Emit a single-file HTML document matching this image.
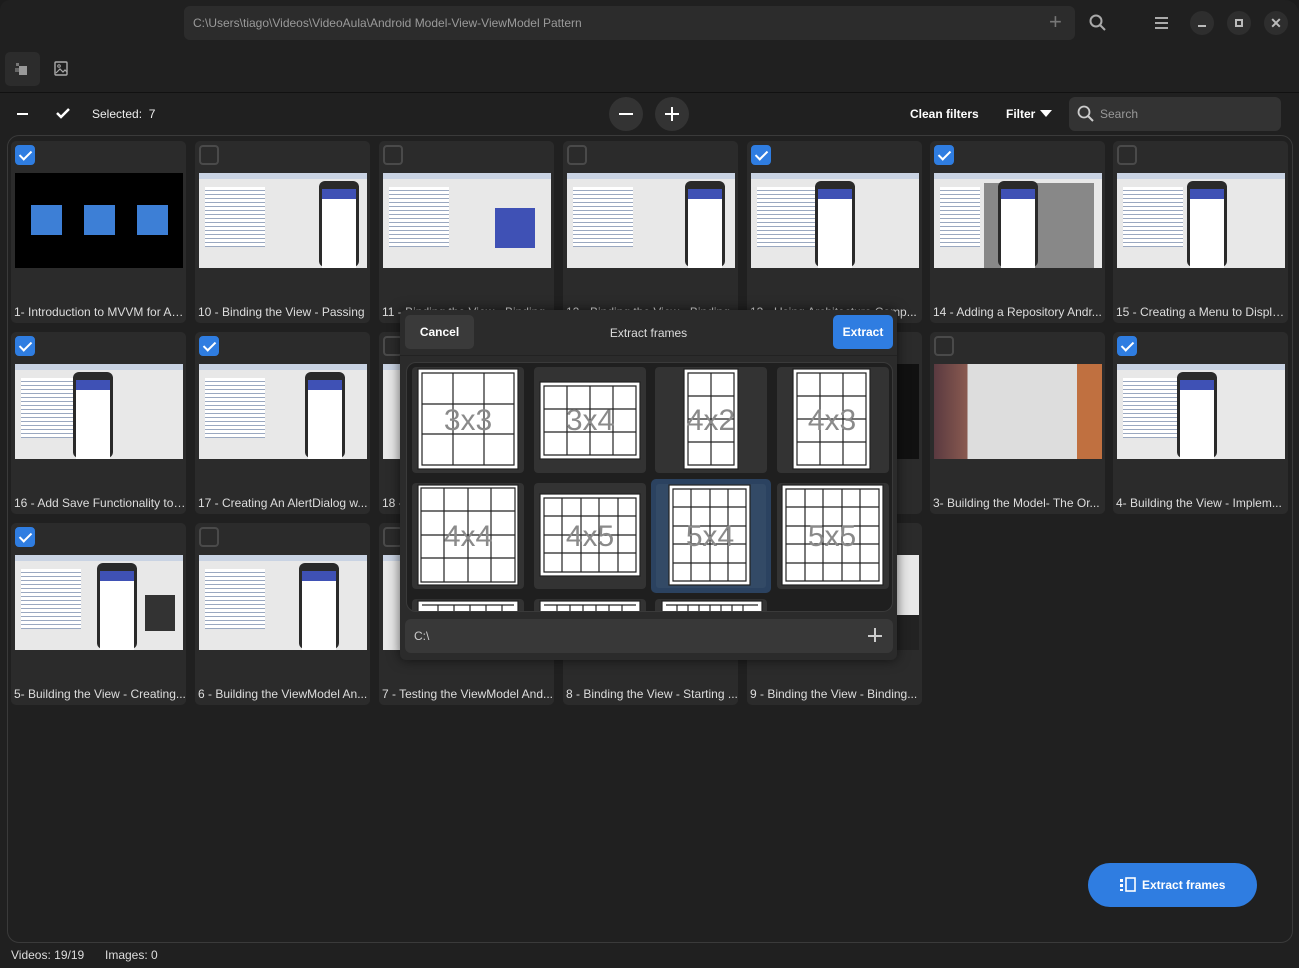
<!DOCTYPE html>
<html><head><meta charset="utf-8"><style>
*{box-sizing:border-box;margin:0;padding:0}
body{width:1299px;height:968px;background:#1c1c1c;font-family:"Liberation Sans",sans-serif;font-size:12px;color:#ddd;position:relative;overflow:hidden}
.win{position:absolute;left:0;top:0;width:1299px;height:968px;background:#202020;border-radius:10px 14px 0 0}
.abs{position:absolute}
.path{left:184px;top:6px;width:891px;height:34px;background:#2c2c2c;border-radius:6px;color:#9a9a9a;padding:10px 9px;font-size:12px}
.cbtn{width:24px;height:24px;border-radius:50%;background:#2e2e2e;top:11px}
.sep{left:0;top:92px;width:1299px;height:1px;background:#111}
.gridbox{left:7px;top:135px;width:1286px;height:808px;border:1px solid #3a3a3a;border-radius:12px}
.card{position:absolute;width:175px;height:182px;background:#2b2b2b;border-radius:5px}
.card .cb{position:absolute;left:4px;top:4px;width:20px;height:20px;border-radius:4px;border:2px solid #4a4a4a}
.card .cb.on{background:#2f7de1;border-color:#2f7de1}
.card .cb.on:after{content:"";position:absolute;left:5px;top:1px;width:5px;height:10px;border:solid #fff;border-width:0 2.5px 2.5px 0;transform:rotate(45deg)}
.card .th{position:absolute;left:4px;top:32px;width:168px;height:95px;background:#e8e8e8;overflow:hidden}
.th .ph{position:absolute;top:8px;width:40px;height:86px;background:#2a2a2a;border-radius:6px}
.th .ph:after{content:"";position:absolute;left:3px;top:8px;width:34px;height:70px;background:#fff;border-top:10px solid #3f51b5}
.th .bar{position:absolute;left:0;top:0;width:100%;height:6px;background:#c9d3e3}
.th .code{position:absolute;left:6px;top:14px;width:60px;height:60px;background:repeating-linear-gradient(#fff 0 3px,#9aa8c0 3px 4px)}
.card .lb{position:absolute;left:3px;top:164px;width:172px;white-space:nowrap;overflow:hidden;text-overflow:ellipsis;font-size:12px;color:#ddd}
.dlg{left:400px;top:310px;width:497px;height:350px;background:#2b2b2b;border-radius:6px;box-shadow:0 0 12px rgba(0,0,0,.6)}
.tile{position:absolute;width:112px;height:106px;background:#333;border-radius:4px}
.tile svg{position:absolute}
</style></head><body>
<div class="win">
<div class="abs path">C:\Users\tiago\Videos\VideoAula\Android Model-View-ViewModel Pattern</div>
<div class="abs" style="left:1049px;top:11px;color:#777;font-size:22px;line-height:22px">+</div>
<svg class="abs" style="left:1089px;top:14px" width="18" height="18"><circle cx="7" cy="7" r="5.5" fill="none" stroke="#aaa" stroke-width="2"/><line x1="11" y1="11" x2="16" y2="16" stroke="#aaa" stroke-width="2"/></svg>
<svg class="abs" style="left:1155px;top:17px" width="14" height="12"><path d="M0 1h13M0 6h13M0 11h13" stroke="#aaa" stroke-width="2"/></svg>
<div class="abs cbtn" style="left:1190px"><div class="abs" style="left:8px;top:14px;width:8px;height:2px;background:#bbb"></div></div>
<div class="abs cbtn" style="left:1227px"><div class="abs" style="left:8px;top:8px;width:8px;height:8px;border:2px solid #bbb"></div></div>
<div class="abs cbtn" style="left:1264px;color:#bbb;font-size:14px;text-align:center;line-height:24px;font-weight:bold">✕</div>
<div class="abs" style="left:5px;top:52px;width:35px;height:34px;background:#2c2c2c;border-radius:5px"></div>
<svg class="abs" style="left:14px;top:62px" width="18" height="16"><rect x="2" y="1" width="3" height="3" fill="#777"/><rect x="5" y="4" width="8" height="9" fill="#999"/><path d="M1 6h4v4H1z" fill="#666"/></svg>
<svg class="abs" style="left:54px;top:61px" width="14" height="16"><rect x="1" y="1" width="12" height="13" rx="1" fill="none" stroke="#aaa" stroke-width="1.4"/><path d="M2 12l4-4 3 3 2-2 2 2" fill="none" stroke="#aaa" stroke-width="1.2"/><circle cx="5" cy="5" r="1.3" fill="none" stroke="#aaa"/></svg>
<div class="abs sep"></div>
<div class="abs" style="left:17px;top:113px;width:11px;height:2px;background:#fff"></div>
<svg class="abs" style="left:56px;top:107px" width="14" height="12"><path d="M1 6l4 4 8-8" fill="none" stroke="#fff" stroke-width="2.5"/></svg>
<div class="abs" style="left:92px;top:107px;color:#eee">Selected:&nbsp; 7</div>
<div class="abs" style="left:609px;top:97px;width:34px;height:34px;border-radius:50%;background:#333"><div class="abs" style="left:10px;top:16px;width:14px;height:2px;background:#fff"></div></div>
<div class="abs" style="left:655px;top:97px;width:34px;height:34px;border-radius:50%;background:#333"><div class="abs" style="left:10px;top:16px;width:14px;height:2px;background:#fff"></div><div class="abs" style="left:16px;top:10px;width:2px;height:14px;background:#fff"></div></div>
<div class="abs" style="left:910px;top:107px;color:#fff;font-weight:bold;font-size:12px">Clean filters</div>
<div class="abs" style="left:1006px;top:107px;color:#fff;font-weight:bold;font-size:12px">Filter</div>
<svg class="abs" style="left:1040px;top:110px" width="12" height="7"><path d="M0 0h12L6 7z" fill="#fff"/></svg>
<div class="abs" style="left:1069px;top:97px;width:212px;height:34px;background:#333;border-radius:6px"></div>
<svg class="abs" style="left:1077px;top:105px" width="18" height="18"><circle cx="7" cy="7" r="5.5" fill="none" stroke="#ccc" stroke-width="1.8"/><line x1="11" y1="11" x2="16" y2="16" stroke="#ccc" stroke-width="2"/></svg>
<div class="abs" style="left:1100px;top:107px;color:#999">Search</div>
<div class="abs gridbox"></div>

<!-- row 1 -->
<div class="card" style="left:11px;top:141px"><div class="cb on"></div><div class="th" style="background:#000"><div class="abs" style="left:16px;top:32px;width:31px;height:30px;background:#3d7fd6"></div><div class="abs" style="left:69px;top:32px;width:31px;height:30px;background:#3d7fd6"></div><div class="abs" style="left:122px;top:32px;width:31px;height:30px;background:#3d7fd6"></div></div><div class="lb">1- Introduction to MVVM for Android</div></div>
<div class="card" style="left:195px;top:141px"><div class="cb"></div><div class="th"><div class="bar"></div><div class="code"></div><div class="ph" style="left:120px"></div></div><div class="lb">10 - Binding the View - Passing</div></div>
<div class="card" style="left:379px;top:141px"><div class="cb"></div><div class="th"><div class="bar"></div><div class="code"></div><div class="abs" style="left:112px;top:35px;width:40px;height:40px;background:#3f51b5"></div></div><div class="lb">11 - Binding the View - Binding</div></div>
<div class="card" style="left:563px;top:141px"><div class="cb"></div><div class="th"><div class="bar"></div><div class="code"></div><div class="ph" style="left:118px"></div></div><div class="lb">12 - Binding the View - Binding</div></div>
<div class="card" style="left:747px;top:141px"><div class="cb on"></div><div class="th"><div class="bar"></div><div class="code"></div><div class="ph" style="left:64px"></div></div><div class="lb">13 - Using Architecture Comp...</div></div>
<div class="card" style="left:930px;top:141px"><div class="cb on"></div><div class="th"><div class="bar"></div><div class="code" style="width:40px"></div><div class="abs" style="left:50px;top:10px;width:110px;height:85px;background:#888"></div><div class="ph" style="left:64px"></div></div><div class="lb">14 - Adding a Repository Andr...</div></div>
<div class="card" style="left:1113px;top:141px"><div class="cb"></div><div class="th"><div class="bar"></div><div class="code"></div><div class="ph" style="left:70px"></div></div><div class="lb">15 - Creating a Menu to Displa...</div></div>
<!-- row 2 -->
<div class="card" style="left:11px;top:332px"><div class="cb on"></div><div class="th"><div class="bar"></div><div class="code"></div><div class="ph" style="left:58px"></div></div><div class="lb">16 - Add Save Functionality to ...</div></div>
<div class="card" style="left:195px;top:332px"><div class="cb on"></div><div class="th"><div class="bar"></div><div class="code"></div><div class="ph" style="left:106px"></div></div><div class="lb">17 - Creating An AlertDialog w...</div></div>
<div class="card" style="left:379px;top:332px"><div class="cb"></div><div class="th"><div class="bar"></div></div><div class="lb">18 - Binding</div></div>
<div class="card" style="left:563px;top:332px"><div class="cb"></div><div class="th"></div><div class="lb">2 -</div></div>
<div class="card" style="left:747px;top:332px"><div class="cb"></div><div class="th" style="background:#111"></div><div class="lb">2 - Different...</div></div>
<div class="card" style="left:930px;top:332px"><div class="cb"></div><div class="th" style="background:linear-gradient(90deg,#5a3a40,#8a5a50 20%,#ddd 20%,#ddd 85%,#c07040 85%)"></div><div class="lb">3- Building the Model- The Or...</div></div>
<div class="card" style="left:1113px;top:332px"><div class="cb on"></div><div class="th"><div class="bar"></div><div class="code"></div><div class="ph" style="left:60px"></div></div><div class="lb">4- Building the View - Implem...</div></div>
<!-- row 3 -->
<div class="card" style="left:11px;top:523px"><div class="cb on"></div><div class="th"><div class="bar"></div><div class="code"></div><div class="ph" style="left:82px"></div><div class="abs" style="left:130px;top:40px;width:30px;height:36px;background:#333"></div></div><div class="lb">5- Building the View - Creating...</div></div>
<div class="card" style="left:195px;top:523px"><div class="cb"></div><div class="th"><div class="bar"></div><div class="code"></div><div class="ph" style="left:100px"></div></div><div class="lb">6 - Building the ViewModel An...</div></div>
<div class="card" style="left:379px;top:523px"><div class="cb"></div><div class="th"><div class="bar"></div></div><div class="lb">7 - Testing the ViewModel And...</div></div>
<div class="card" style="left:563px;top:523px"><div class="cb"></div><div class="th"></div><div class="lb">8 - Binding the View - Starting ...</div></div>
<div class="card" style="left:747px;top:523px"><div class="cb"></div><div class="th"><div class="abs" style="left:140px;top:60px;width:28px;height:35px;background:#222"></div></div><div class="lb">9 - Binding the View - Binding...</div></div>

<!-- dialog -->
<div class="abs dlg">
 <div class="abs" style="left:5px;top:5px;width:69px;height:34px;background:#3a3a3a;border-radius:5px;color:#fff;font-weight:bold;text-align:center;line-height:34px">Cancel</div>
 <div class="abs" style="left:0;top:16px;width:497px;text-align:center;color:#ddd">Extract frames</div>
 <div class="abs" style="left:433px;top:5px;width:60px;height:34px;background:#2f7de1;border-radius:5px;color:#fff;font-weight:bold;text-align:center;line-height:34px">Extract</div>
 <div class="abs" style="left:0;top:45px;width:497px;height:1px;background:#222"></div>
 <div class="abs" style="left:6px;top:52px;width:487px;height:250px;background:#1f1f1f;border:1px solid #3a3a3a;border-radius:10px;overflow:hidden">
 <svg width="487" height="250" style="position:absolute;left:0;top:0" font-family="Liberation Sans,sans-serif">
  <g fill="#333"><rect x="5" y="4" width="112" height="106" rx="4"/><rect x="127" y="4" width="112" height="106" rx="4"/><rect x="248" y="4" width="112" height="106" rx="4"/><rect x="370" y="4" width="112" height="106" rx="4"/><rect x="5" y="120" width="112" height="106" rx="4"/><rect x="127" y="120" width="112" height="106" rx="4"/><rect x="370" y="120" width="112" height="106" rx="4"/><rect x="5" y="236" width="112" height="30" rx="4"/><rect x="127" y="236" width="112" height="30" rx="4"/><rect x="248" y="236" width="112" height="30" rx="4"/></g>
  <rect x="244" y="116" width="120" height="114" rx="5" fill="#2b4260"/><rect x="249" y="121" width="110" height="104" rx="3" fill="#334a66"/>
  <g stroke="#222" stroke-width="1.2" fill="#fff">
   <rect x="11" y="6" width="100" height="100"/><rect x="133" y="19" width="100" height="77"/><rect x="277" y="6" width="54" height="100"/><rect x="386" y="6" width="77" height="100"/>
   <rect x="11" y="122" width="100" height="100"/><rect x="133" y="131" width="100" height="82"/><rect x="262" y="122" width="81" height="100"/><rect x="375" y="122" width="101" height="100"/>
   <rect x="11" y="238" width="100" height="20"/><rect x="133" y="238" width="100" height="20"/><rect x="255" y="238" width="100" height="20"/>
  </g>
  <g stroke="#222" stroke-width="1.2" fill="none">
   <path d="M15 10h92v92h-92zM46 10v92M77 10v92M15 41h92M15 71h92"/>
   <path d="M137 23h92v69h-92zM160 23v69M183 23v69M206 23v69M137 46h92M137 69h92"/>
   <path d="M281 10h46v92h-46zM304 10v92M281 33h46M281 56h46M281 79h46"/>
   <path d="M390 10h69v92h-69zM413 10v92M436 10v92M390 33h69M390 56h69M390 79h69"/>
   <path d="M14 125h94v94h-94zM37 125v94M61 125v94M84 125v94M14 148h94M14 172h94M14 195h94"/>
   <path d="M137 135h92v74h-92zM155 135v74M174 135v74M192 135v74M211 135v74M137 153h92M137 172h92M137 190h92"/>
   <path d="M266 126h73v92h-73zM284 126v92M303 126v92M321 126v92M266 144h73M266 163h73M266 181h73M266 200h73"/>
   <path d="M379 126h93v92h-93zM398 126v92M416 126v92M435 126v92M453 126v92M379 144h93M379 163h93M379 181h93M379 200h93"/>
   <path d="M15 242h92M31 242v16M47 242v16M63 242v16M79 242v16M95 242v16M137 242h92M150 242v16M163 242v16M176 242v16M189 242v16M202 242v16M215 242v16M259 242h92M270 242v16M281 242v16M292 242v16M303 242v16M314 242v16M325 242v16M336 242v16"/>
  </g>
  <g fill="#8a8a8a" font-size="30" text-anchor="middle">
   <text x="61" y="67">3x3</text><text x="183" y="67">3x4</text><text x="304" y="67">4x2</text><text x="425" y="67">4x3</text>
   <text x="61" y="183">4x4</text><text x="183" y="183">4x5</text><text x="303" y="183">5x4</text><text x="425" y="183">5x5</text>
  </g>
 </svg>
 </div>
 <div class="abs" style="left:5px;top:309px;width:488px;height:34px;background:#383838;border-radius:6px;color:#ccc;padding:10px 9px">C:\</div>
 <div class="abs" style="left:468px;top:316px;width:14px;height:2px;background:#ccc;margin-top:9px"></div>
 <div class="abs" style="left:474px;top:318px;width:2px;height:14px;background:#ccc"></div>
</div>

<div class="abs" style="left:1088px;top:863px;width:169px;height:44px;background:#2f7de1;border-radius:22px;color:#fff;font-weight:bold;line-height:44px;padding-left:54px">Extract frames</div>
<svg class="abs" style="left:1120px;top:877px" width="18" height="16"><rect x="0" y="2" width="3" height="3" fill="#fff"/><rect x="0" y="7" width="3" height="3" fill="#fff"/><rect x="0" y="12" width="3" height="2" fill="#fff"/><rect x="6" y="1" width="9" height="13" fill="none" stroke="#fff" stroke-width="1.6"/></svg>
<div class="abs" style="left:11px;top:948px;color:#ddd">Videos: 19/19</div>
<div class="abs" style="left:105px;top:948px;color:#ddd">Images: 0</div>
</div>
</body></html>
